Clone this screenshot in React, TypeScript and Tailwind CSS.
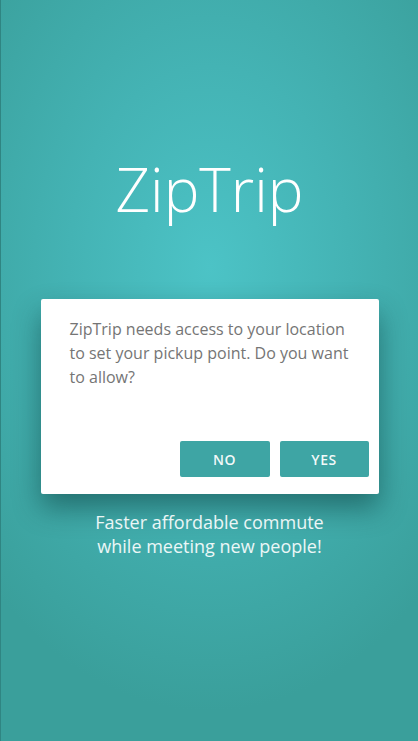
export default function App() {
  return (
    <div
      className="relative flex h-[741px] w-[418px] flex-col items-center overflow-hidden border-l border-[#2f8582] bg-[radial-gradient(ellipse_75%_60%_at_50%_36%,#4cc3c6_0%,#44b3b4_45%,#3a9f9b_100%)] pt-[155px]"
      style={{ fontFamily: '"Open Sans", "Noto Sans", sans-serif' }}
    >
      <h1 className="text-[60px] font-light leading-[68px] text-white">ZipTrip</h1>

      <div className="mt-[76px] flex h-[195px] w-[338px] flex-col rounded-[2px] bg-white shadow-[0_14px_28px_rgba(0,40,40,0.45)]">
        <p className="pl-[29px] pr-[16px] pt-[18px] text-[16px] leading-[24px] text-[#757575]">
          ZipTrip needs access to your location to set your pickup point. Do you want to allow?
        </p>
        <div className="mt-auto flex justify-end gap-[10px] pb-[17px] pr-[10px]">
          <button className="h-[36px] w-[90px] rounded-[2px] bg-[#3ea5a4] text-[14px] font-semibold tracking-[0.5px] text-white/95">
            NO
          </button>
          <button className="h-[36px] w-[89px] rounded-[2px] bg-[#3ea5a4] text-[14px] font-semibold tracking-[0.5px] text-white/95">
            YES
          </button>
        </div>
      </div>

      <p className="mt-[16px] text-center text-[18px] leading-[24px] text-white/90">
        Faster affordable commute
        <br />
        while meeting new people!
      </p>
    </div>
  );
}
